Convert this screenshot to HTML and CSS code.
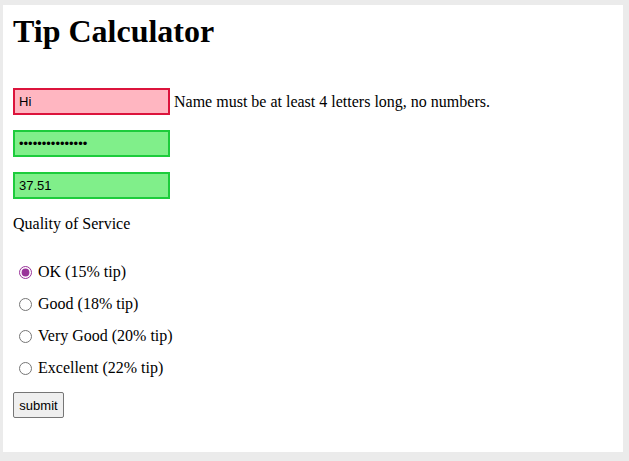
FILE: index.html
```html
<!DOCTYPE html>
<html>
<head>
<meta charset="utf-8">
<title>Tip Calculator</title>
<link rel="stylesheet" href="styles.css">
</head>
<body>
<div class="page">
  <h1 class="title">Tip Calculator</h1>
  <form class="form">
    <div class="field">
      <input class="text-input invalid" type="text" value="Hi">
      <span class="error">Name must be at least 4 letters long, no numbers.</span>
    </div>
    <div class="field">
      <input class="text-input valid" type="password" value="passwordpasswor">
    </div>
    <div class="field">
      <input class="text-input valid" type="text" value="37.51">
    </div>
    <p class="label">Quality of Service</p>
    <div class="options">
      <label class="option"><input class="radio" type="radio" name="q" checked>OK (15% tip)</label>
      <label class="option"><input class="radio" type="radio" name="q">Good (18% tip)</label>
      <label class="option"><input class="radio" type="radio" name="q">Very Good (20% tip)</label>
      <label class="option"><input class="radio" type="radio" name="q">Excellent (22% tip)</label>
    </div>
    <div class="actions">
      <button class="submit" type="button">submit</button>
    </div>
  </form>
</div>
</body>
</html>
```
FILE: styles.css
```css
html, body {
  margin: 0;
  height: 100%;
}
body {
  background: #ebebeb;
  padding: 5px 6px 9px 3px;
  box-sizing: border-box;
  font-family: "Liberation Serif", "Times New Roman", serif;
  font-size: 16px;
  color: #000;
}
.page {
  background: #fff;
  height: 100%;
  box-sizing: border-box;
  padding: 8px 10px;
}
.title {
  margin: 0;
  font-size: 32px;
  font-weight: bold;
  line-height: 37px;
}
.form {
  display: flex;
  flex-direction: column;
  margin-top: 38px;
}
.field {
  display: flex;
  align-items: center;
  gap: 4px;
  margin-bottom: 15px;
}
.text-input {
  width: 157px;
  height: 27px;
  box-sizing: border-box;
  border: 2px solid;
  padding: 0 4px;
  margin: 0;
  font-family: "Liberation Sans", Arial, sans-serif;
  font-size: 13px;
  color: #000;
  outline: none;
}
.invalid {
  background: #ffb6c1;
  border-color: #dc143c;
}
.valid {
  background: #80ef8a;
  border-color: #1dcc3c;
}
.error {
  line-height: 18px;
}
.label {
  margin: 1px 0 0;
  line-height: 18px;
}
.options {
  display: flex;
  flex-direction: column;
  gap: 14px;
  margin-top: 30px;
}
.option {
  display: flex;
  align-items: center;
  line-height: 18px;
}
.radio {
  width: 13px;
  height: 13px;
  margin: 0 6px 0 6px;
  accent-color: #993399;
}
.actions {
  margin-top: 15px;
}
.submit {
  width: 51px;
  height: 26px;
  padding: 0;
  font-family: "Liberation Sans", Arial, sans-serif;
  font-size: 13px;
  color: #000;
  background: #efefef;
  border: 1px solid #767676;
  border-radius: 2px;
}
```
